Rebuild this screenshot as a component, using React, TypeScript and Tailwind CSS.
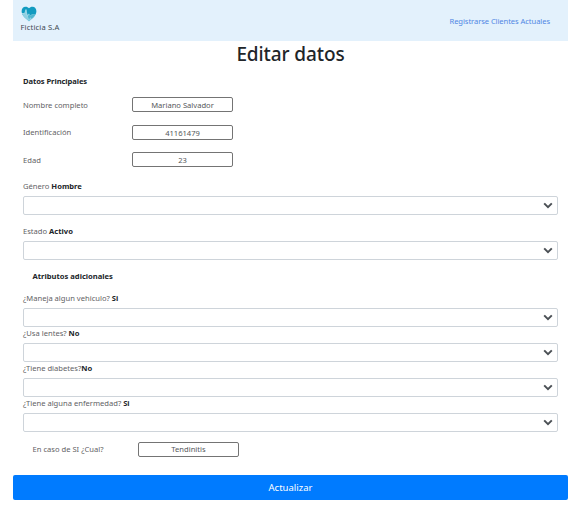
import React from "react";

function Logo() {
  return (
    <svg width="16" height="16" viewBox="0 0 16 16" className="block">
      <path d="M8 15.2C5.200 12.800.6 9.600.6 5.300.6 2.500 2.200.7 4.500.7 6 .7 7.300 1.400 8 2.200 8.700 1.400 10 .7 11.500.7c2.300 0 3.900 1.800 3.900 4.600C15.400 9.600 10.800 12.800 8 15.200Z" fill="#129bc0" />
      <path d="M.8 7.300H3.600L5 3 6.200 9 8 7.500l1.400 2L11 8.300l3.500.2C13 11.300 10.400 13.200 8 15.200 5.400 13 1.800 10.600.8 7.300Z" fill="#8fd0e2" />
      <path d="M8.200 8 9.700 10 11 8.600l3.300.1C13.300 10.300 12 11.600 10.600 12.700L9.300 11.300 8.100 13.500 6.900 10.500Z" fill="#4fb6cf" />
      <path d="M1 7.500h2.700L5 3.600 6.300 10.500" fill="none" stroke="#a5dbea" strokeWidth=".8" />
    </svg>
  );
}

function Field({ label, value, className }: { label: string; value: string; className: string }) {
  return (
    <div className={`flex h-[15px] ${className}`}>
      <span className="w-[109px] shrink-0 text-[#5f6265]">{label}</span>
      <input
        defaultValue={value}
        className="h-[15px] w-[101px] rounded-[2px] border border-[#747474] bg-white text-center leading-[13px] text-[#55585b] outline-none"
      />
    </div>
  );
}

function SelectField({ label, value, className }: { label: string; value: string; className: string }) {
  return (
    <div>
      <div className={`whitespace-pre text-[#5f6265] ${className}`}>
        {label}
        <b className="font-bold text-[#212529]">{value}</b>
      </div>
      <button className="flex h-[19px] w-full items-center justify-end rounded-[2px] border border-[#ced4da] bg-white pr-[4px]">
        <svg width="10" height="7" viewBox="0 0 10 7" className="block">
          <path d="m1.200 1.400 3.800 3.700 3.800-3.700" fill="none" stroke="#4b5055" strokeWidth="2" />
        </svg>
      </button>
    </div>
  );
}

export default function App() {
  return (
    <div className="h-[516px] w-[584px] overflow-hidden bg-white pr-4 pl-[13px] font-['Noto_Sans',sans-serif] text-[7.6px] leading-[12px]">
      <header className="flex h-[41px] items-start justify-between bg-[#e3f1fc] pr-[18px] pl-[7.5px]">
        <div className="pt-[6px]">
          <Logo />
          <div className="-mt-px tracking-[0.02em] text-[#3f4850]">Ficticia S.A</div>
        </div>
        <a className="pt-[15px] tracking-[-0.01em] text-[#5087e4]">Registrarse Clientes Actuales</a>
      </header>
      <h1 className="h-[27px] text-center text-[19px] leading-[27px] font-medium tracking-[-0.005em] text-[#212529]">Editar datos</h1>
      <main className="px-[10px]">
        <h2 className="h-[29px] pt-[7px] font-bold tracking-[-0.01em] text-[#212529]">Datos Principales</h2>
        <Field label="Nombre completo" value="Mariano Salvador" className="leading-[17px]" />
        <Field label="Identificación" value="41161479" className="mt-[13px] leading-[15px]" />
        <Field label="Edad" value="23" className="mt-[12px] leading-[17px]" />
        <SelectField label="Género " value="Hombre" className="h-[29px] pt-[13px]" />
        <SelectField label="Estado " value="Activo" className="h-[26px] pt-[10px]" />
        <h2 className="h-[26px] pt-[10px] pl-[9.5px] font-bold text-[#212529]">Atributos adicionales</h2>
        <SelectField label="¿Maneja algun vehiculo? " value="Si" className="h-[22px] pt-[6px]" />
        <SelectField label="¿Usa lentes? " value="No" className="h-[16px]" />
        <SelectField label="¿Tiene diabetes?" value="No" className="h-[16px]" />
        <SelectField label="¿Tiene alguna enfermedad? " value="Si" className="h-[16px]" />
        <div className="flex h-[43px] items-start pt-[10px] pl-[9.5px]">
          <span className="w-[105.5px] pt-px text-[#5f6265]">En caso de SI ¿Cual?</span>
          <input
            defaultValue="Tendinitis"
            className="h-[15px] w-[101px] rounded-[2px] border border-[#747474] bg-white pb-px text-center text-[#55585b] outline-none"
          />
        </div>
      </main>
      <button className="block h-[25px] w-full rounded-[2px] bg-[#007bff] text-[9.5px] tracking-normal text-white">Actualizar</button>
    </div>
  );
}
